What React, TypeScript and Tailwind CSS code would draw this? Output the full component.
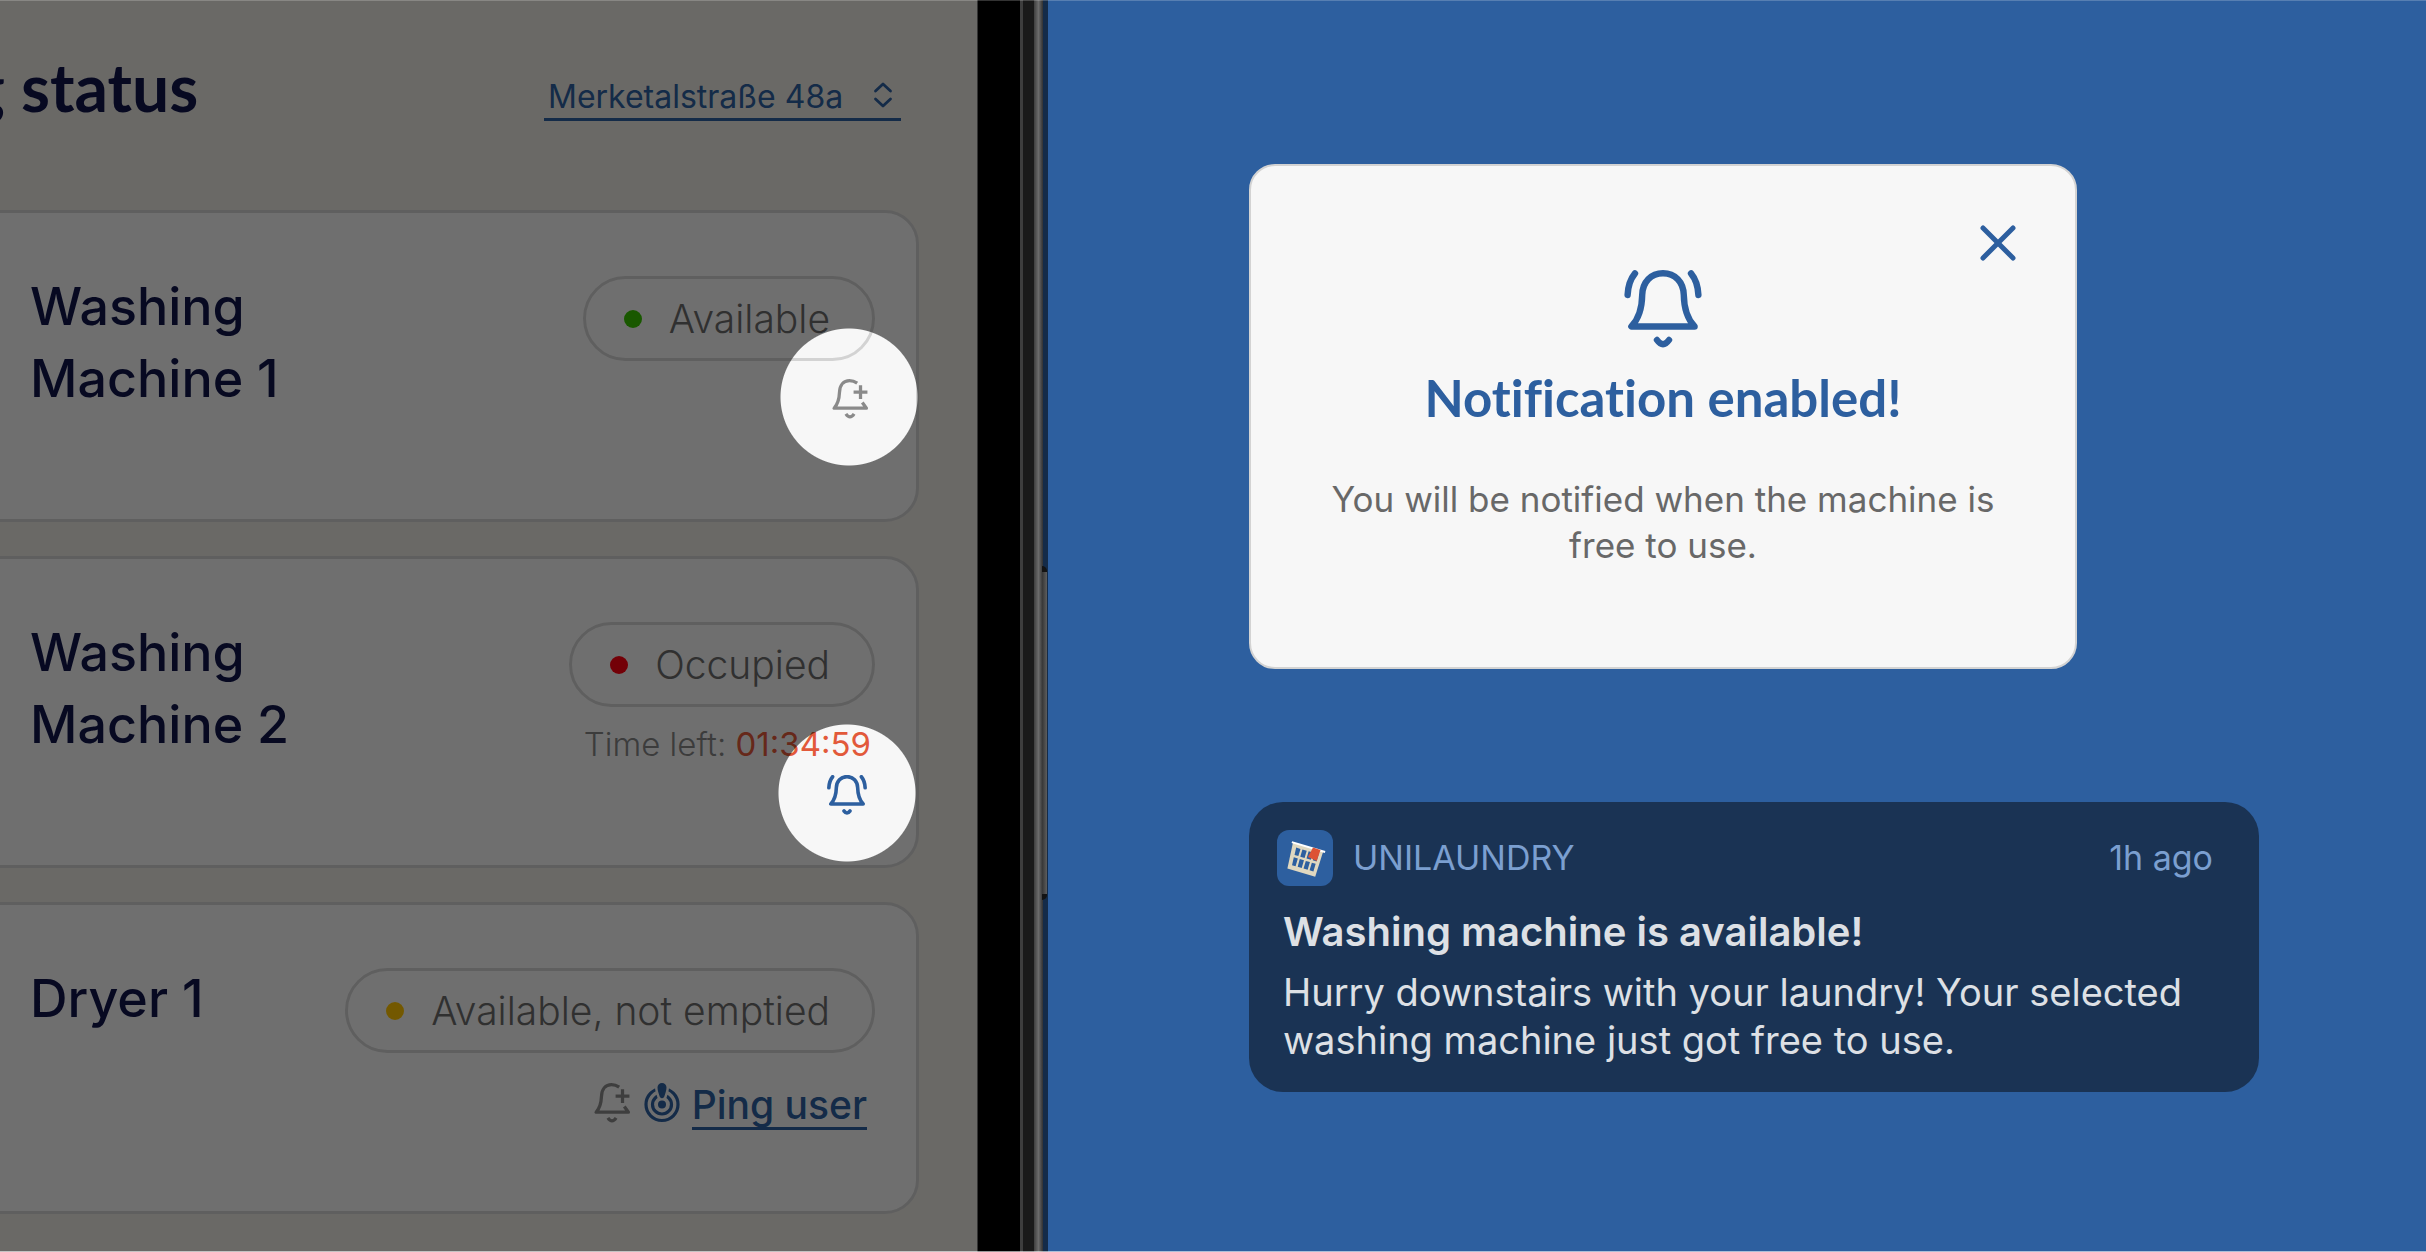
import type { ReactNode } from "react";

const HEADING = "font-['Lato',sans-serif] [font-variant-ligatures:none]";

function BellRing({ className, weight = 6.4 }: { className: string; weight?: number }) {
  return (
    <svg viewBox="0 0 78 78" fill="none" stroke="currentColor" strokeWidth={weight} strokeLinecap="round" strokeLinejoin="round" className={className} aria-hidden="true">
      <path d="M39 3.2C27 3.2 18.5 12 18.2 25C18 38 15 48.5 7.4 56.5H70.6C63 48.5 60 38 59.8 25C59.5 12 51 3.2 39 3.2Z" />
      <path d="M33 70Q39 78.4 45 70" />
      <path d="M11 3.4C6 9.5 4 16 3.6 25" />
      <path d="M67 3.4C72 9.5 74 16 74.4 25" />
    </svg>
  );
}

function BellPlus({ className }: { className: string }) {
  return (
    <svg viewBox="0 0 78 78" fill="none" stroke="currentColor" strokeWidth="6.4" strokeLinejoin="round" className={className} aria-hidden="true">
      <path d="M53 8C48 4.6 43 3.2 38 3.2C26.5 3.2 19 12 18.5 26C18 39 15 49 8 57H71L63 46" />
      <path d="M59.5 12V39M46 25.5H73" />
      <path d="M31 68Q39 80 47 68" />
    </svg>
  );
}

const PIN = "M13.5 4.5a4.5 4.5 0 0 1 9 0c0 3-1.6 7-2.4 9.500q-2.100 2.400-4.200 0c-.8-2.500-2.400-6.500-2.400-9.500Z";

function PingIcon({ className }: { className: string }) {
  return (
    <svg viewBox="0 0 36 40" fill="none" className={className} aria-hidden="true">
      <circle cx="18" cy="21.5" r="16" stroke="currentColor" strokeWidth="3.2" />
      <circle cx="18" cy="21.5" r="9.5" stroke="currentColor" strokeWidth="3.2" />
      <path d={PIN} fill="currentColor" stroke="#f7f7f7" strokeWidth="5" />
      <path d={PIN} fill="currentColor" />
      <circle cx="18" cy="21.5" r="4" fill="currentColor" />
    </svg>
  );
}

function BasketIcon() {
  return (
    <svg viewBox="0 0 56 56" className="size-14 shrink-0 rounded-xl bg-[#2d5f9f]" aria-hidden="true">
      <g transform="translate(16 12.5) rotate(16.5)">
        <path d="M0 0H31.5L31 26.5H2Z" fill="#e0d8c0" />
        <g fill="#2d5f9f">
          <path d="M4.5 4H9V11.5H5Z M11 4H15.5V11.5H11Z M17.5 4H22V11.5H17.5Z M24 4H28V11.5H24Z" />
          <path d="M5 14H9.2V22H5.5Z M11.2 14H15.6V22H11.4Z M17.5 14H21.8V22H17.5Z M23.8 14H27.8V22H23.8Z" />
        </g>
        <path d="M-1.2 0H33.5" stroke="#ffffff" strokeWidth="2" />
      </g>
      <path d="M36 17.5L43.5 20L39.7 31L31 27Z" fill="#dd5335" />
    </svg>
  );
}

function StatusPill({ dot, children }: { dot: string; children: ReactNode }) {
  return (
    <div className="flex h-[85px] items-center gap-[27px] rounded-full border-3 border-[#d3d3d3] pr-[42px] pl-[38px]">
      <span className={`size-[18px] rounded-full ${dot}`} />
      <span className="text-[39px] leading-[48px] font-light text-[#6b6b6b]">{children}</span>
    </div>
  );
}

function MachineCard({ name, children }: { name: string; children: ReactNode }) {
  return (
    <article className="-ml-10 flex h-[312px] items-start justify-between rounded-[34px] border-3 border-[#d3d3d3] bg-[#f7f7f7] pr-[41px] pl-[67px]">
      <h2 className="w-[280px] pt-[58px] text-[52px] leading-[72px] font-medium text-[#10164b]">{name}</h2>
      <div className="-ml-20 flex shrink-0 flex-col items-end pt-[63px]">{children}</div>
    </article>
  );
}

function PhoneEdge() {
  return (
    <div className="relative flex w-[71px] shrink-0 bg-[#2d5f9f]">
      <div className="w-px bg-[#737373]" />
      <div className="w-[42px] bg-black" />
      <div className="w-[3px] bg-[#8a8a8a]" />
      <div className="w-[11px] bg-[#3a3a3a]" />
      <div className="w-[9px] bg-linear-to-r from-[#8a8a8a] via-[#eeeeee] to-[#6e6e6e]" />
      <div className="absolute top-[566px] right-px h-[334px] w-[5px] rounded-r-md border-y-6 border-[#2a2a2a] bg-linear-to-r from-[#777777] to-[#d0d0d0]" />
    </div>
  );
}

function PhoneScreen() {
  return (
    <main className="min-w-0 flex-1 overflow-hidden bg-[#ece9e3] pr-[58px] pb-[38px]">
      <header className="flex items-end justify-between pt-[53px] pr-[18px] pb-[89px]">
        <h1 className={`-ml-[30px] text-[66px] leading-[68px] font-bold whitespace-nowrap text-[#10164b] ${HEADING}`}>g status</h1>
        <div className="relative">
          <select aria-label="Building" className="h-[45px] w-[357px] appearance-none border-b-3 border-[#2d5f9f] bg-transparent pl-1 text-[32px] leading-[42px] text-[#2d5f9f]">
            <option>Merketalstraße 48a</option>
          </select>
          <svg viewBox="0 0 20 26" fill="none" stroke="currentColor" strokeWidth="2.8" strokeLinecap="round" strokeLinejoin="round" className="pointer-events-none absolute top-1.5 right-2 h-[26px] w-5 text-[#2d5f9f]" aria-hidden="true">
            <path d="M2.5 9L10 2L17.5 9M2.5 17L10 24L17.5 17" />
          </svg>
        </div>
      </header>

      <div className="flex flex-col gap-[34px]">
        <MachineCard name="Washing Machine 1">
          <StatusPill dot="bg-[#38c400]">Available</StatusPill>
          <button aria-label="Enable notification" className="mt-[18px] mr-[5px] text-[#8a8a8a]">
            <BellPlus className="size-10" />
          </button>
        </MachineCard>
        <MachineCard name="Washing Machine 2">
          <StatusPill dot="bg-[#ff0010]">Occupied</StatusPill>
          <p className="mt-[17px] mr-1 text-[33px] leading-[40px] font-light whitespace-pre text-[#858585]">
            Time left: <time className="font-normal text-[#e2593a]">01:34:59</time>
          </p>
          <button aria-label="Disable notification" className="mt-[11px] mr-2 text-[#2d5f9f]">
            <BellRing className="size-10" weight={7} />
          </button>
        </MachineCard>
        <MachineCard name="Dryer 1">
          <StatusPill dot="bg-[#ffc400]">Available, not emptied</StatusPill>
          <div className="mt-[30px] mr-2 flex items-start gap-2.5 text-[#2d5f9f]">
            <button aria-label="Enable notification" className="text-[#8a8a8a]">
              <BellPlus className="size-10" />
            </button>
            <PingIcon className="size-10" />
            <a href="#ping" className="border-b-3 border-[#2d5f9f] text-[39px] leading-[44px] font-medium">Ping user</a>
          </div>
        </MachineCard>
      </div>
    </main>
  );
}

function Modal() {
  return (
    <section role="dialog" aria-labelledby="modal-title" className="relative flex w-full max-w-[828px] flex-col items-center rounded-[26px] border-2 border-[#d3d3d3] bg-[#f7f7f7] px-[70px] pt-[104px] pb-[99px] text-center">
      <button aria-label="Close" className="absolute top-[59px] right-[59px] text-[#2d5f9f]">
        <svg viewBox="0 0 36 36" fill="none" stroke="currentColor" strokeWidth="5" strokeLinecap="round" className="size-9" aria-hidden="true">
          <path d="M3 3L33 33M33 3L3 33" />
        </svg>
      </button>
      <BellRing className="size-[78px] text-[#2d5f9f]" />
      <h2 id="modal-title" className={`mt-5 text-[51px] leading-[60px] font-bold text-[#2d5f9f] ${HEADING}`}>Notification enabled!</h2>
      <p className="mt-12 text-[35px] leading-[46px] text-[#686868]">You will be notified when the machine is free to use.</p>
    </section>
  );
}

function PushNotification() {
  return (
    <section className="mt-[133px] w-full max-w-[1010px] rounded-[34px] bg-[#1a3354] p-7 text-[#dde0e5]">
      <div className="flex items-center gap-5 pr-[18px] text-[34px] leading-[40px] text-[#7b9fd0]">
        <BasketIcon />
        <span className="flex-1">UNILAUNDRY</span>
        <time>1h ago</time>
      </div>
      <div className="mt-[22px] pl-1.5">
        <h3 className="text-[40px] leading-[48px] font-semibold">Washing machine is available!</h3>
        <p className="mt-3 text-[38px] leading-[48px]">Hurry downstairs with your laundry! Your selected washing machine just got free to use.</p>
      </div>
    </section>
  );
}

export default function App() {
  return (
    <div className="relative grid min-h-screen grid-cols-[1048fr_1378fr] bg-[#2d5f9f] font-['Inter',sans-serif]">
      <div className="relative flex min-w-0">
        <PhoneScreen />
        <PhoneEdge />
        {/* Dimming layer with two round spotlights over the bell buttons */}
        <div className="pointer-events-none absolute inset-0 bg-black/55 [mask-composite:intersect] [mask-image:radial-gradient(circle_at_calc(100%-199px)_397px,transparent_68px,black_69px),radial-gradient(circle_at_calc(100%-201px)_793px,transparent_68px,black_69px)]" />
      </div>
      <div className="flex flex-col pt-[164px] pr-[167px] pb-[100px] pl-[201px]">
        <Modal />
        <PushNotification />
      </div>
      <div className="pointer-events-none absolute inset-0 border-t border-b border-t-white/20 border-b-white/60" />
    </div>
  );
}
